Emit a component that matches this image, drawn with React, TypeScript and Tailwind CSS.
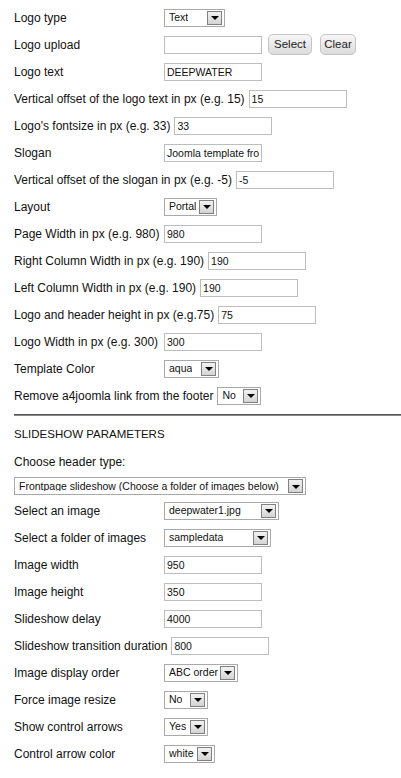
import React from 'react';

type Field =
  | { kind: 'select'; label: string; value: string; w: string }
  | { kind: 'input'; label: string; value: string }
  | { kind: 'upload'; label: string };

const logoFields: Field[] = [
  { kind: 'select', label: 'Logo type', value: 'Text', w: 'w-[61px]' },
  { kind: 'upload', label: 'Logo upload' },
  { kind: 'input', label: 'Logo text', value: 'DEEPWATER' },
  { kind: 'input', label: 'Vertical offset of the logo text in px (e.g. 15)', value: '15' },
  { kind: 'input', label: "Logo's fontsize in px (e.g. 33)", value: '33' },
  { kind: 'input', label: 'Slogan', value: 'Joomla template from a4joomla.com' },
  { kind: 'input', label: 'Vertical offset of the slogan in px (e.g. -5)', value: '-5' },
  { kind: 'select', label: 'Layout', value: 'Portal', w: 'w-[53px]' },
  { kind: 'input', label: 'Page Width in px (e.g. 980)', value: '980' },
  { kind: 'input', label: 'Right Column Width in px (e.g. 190)', value: '190' },
  { kind: 'input', label: 'Left Column Width in px (e.g. 190)', value: '190' },
  { kind: 'input', label: 'Logo and header height in px (e.g.75)', value: '75' },
  { kind: 'input', label: 'Logo Width in px (e.g. 300)', value: '300' },
  { kind: 'select', label: 'Template Color', value: 'aqua', w: 'w-[55px]' },
  { kind: 'select', label: 'Remove a4joomla link from the footer', value: 'No', w: 'w-[44px]' },
];

const slideFields: Field[] = [
  { kind: 'select', label: 'Select an image', value: 'deepwater1.jpg', w: 'w-[115px]' },
  { kind: 'select', label: 'Select a folder of images', value: 'sampledata', w: 'w-[107px]' },
  { kind: 'input', label: 'Image width', value: '950' },
  { kind: 'input', label: 'Image height', value: '350' },
  { kind: 'input', label: 'Slideshow delay', value: '4000' },
  { kind: 'input', label: 'Slideshow transition duration', value: '800' },
  { kind: 'select', label: 'Image display order', value: 'ABC order', w: 'w-[74px]' },
  { kind: 'select', label: 'Force image resize', value: 'No', w: 'w-[44px]' },
  { kind: 'select', label: 'Show control arrows', value: 'Yes', w: 'w-[44px]' },
  { kind: 'select', label: 'Control arrow color', value: 'white', w: 'w-[51px]' },
];

function FakeSelect({ value, w }: { value: string; w: string }) {
  return (
    <div className={`${w} h-[18px] border border-[#a9a9a9] bg-white flex items-center justify-between gap-[2px] pl-[4px] pr-[2px]`}>
      <span className="min-w-0 text-[10.5px] text-[#111] leading-none whitespace-nowrap overflow-hidden">{value}</span>
      <span className="w-[15px] h-[14px] shrink-0 border border-[#808080] bg-gradient-to-b from-[#f2f2f2] to-[#d4d4d4] flex items-center justify-center">
        <span className="w-0 h-0 border-l-[4px] border-r-[4px] border-t-[4px] border-l-transparent border-r-transparent border-t-black mt-[1px]" />
      </span>
    </div>
  );
}

function TextBox({ value }: { value: string }) {
  return (
    <input
      readOnly
      value={value}
      className="w-[98px] h-[18px] border border-[#bdbdbd] bg-white px-[2px] text-[10.5px] text-[#111] outline-none"
    />
  );
}

function Btn({ w, children }: { w: string; children: React.ReactNode }) {
  return (
    <button className={`${w} h-[21px] rounded-[5px] border border-[#c4c4c4] bg-gradient-to-b from-[#f7f7f7] to-[#dcdcdc] text-[11.5px] text-[#222] leading-none`}>
      {children}
    </button>
  );
}

function Row({ f }: { f: Field }) {
  return (
    <div className="h-[27px] flex items-center gap-[4px]">
      <span className="min-w-[146px] text-[12px] text-[#111] whitespace-nowrap">{f.label}</span>
      {f.kind === 'select' && <FakeSelect value={f.value} w={f.w} />}
      {f.kind === 'input' && <TextBox value={f.value} />}
      {f.kind === 'upload' && (
        <div className="flex items-center">
          <TextBox value="" />
          <div className="ml-[6px] flex gap-[8px]">
            <Btn w="w-[44px]">Select</Btn>
            <Btn w="w-[36px]">Clear</Btn>
          </div>
        </div>
      )}
    </div>
  );
}

export default function App() {
  return (
    <div className="w-[401px] h-[778px] bg-white overflow-hidden pt-[4px] font-['Liberation_Sans',Arial,sans-serif]">
      <div className="pl-[14px]">
        {logoFields.map((f) => (
          <Row key={f.label} f={f} />
        ))}
      </div>

      <div className="ml-[14px] mt-[5px] h-[2px] border-t border-[#555] border-b border-b-[#8a8a8a]" />

      <div className="pl-[14px] pt-[5px]">
        <div className="h-[27px] flex items-center text-[11.5px] text-[#111]">SLIDESHOW PARAMETERS</div>
        <div className="h-[27px] flex items-center text-[12px] text-[#111]">Choose header type:</div>
        <div className="h-[22px] flex items-center">
          <FakeSelect value="Frontpage slideshow (Choose a folder of images below)" w="w-[292px]" />
        </div>
        {slideFields.map((f) => (
          <Row key={f.label} f={f} />
        ))}
      </div>
    </div>
  );
}
